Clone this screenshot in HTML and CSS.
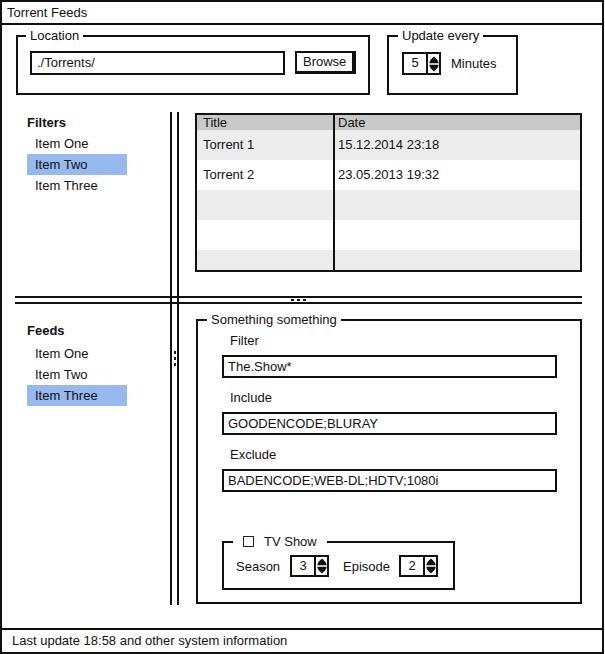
FILE: index.html
```html
<!DOCTYPE html>
<html>
<head>
<meta charset="utf-8">
<title>Torrent Feeds</title>
<link rel="stylesheet" href="styles.css">
</head>
<body>
<div class="window">
  <div class="titlebar">Torrent Feeds</div>
  <div class="content">
    <div class="toprow">
      <fieldset class="group loc">
        <legend>Location</legend>
        <div class="row">
          <div class="textbox loc-input">./Torrents/</div>
          <div class="button">Browse</div>
        </div>
      </fieldset>
      <fieldset class="group upd">
        <legend>Update every</legend>
        <div class="row">
          <div class="spin big">
            <div class="spin-val">5</div>
            <div class="spin-arr"><svg width="10" height="16" viewBox="0 0 10 16"><path d="M5 0.5C7 2.5 9.6 4.2 9.6 7.2H0.4C0.4 4.2 3 2.5 5 0.5Z M0.4 8.8H9.6C9.6 11.8 7 13.5 5 15.5C3 13.5 0.4 11.8 0.4 8.8Z" fill="#111"/></svg></div>
          </div>
          <span class="unit">Minutes</span>
        </div>
      </fieldset>
    </div>

    <div class="splitgrid">
      <div class="pane-list top">
        <div class="list-title">Filters</div>
        <div class="list-item">Item One</div>
        <div class="list-item selected">Item Two</div>
        <div class="list-item">Item Three</div>
      </div>

      <div class="pane-table">
        <div class="table">
          <div class="trow thead"><div class="cell c1">Title</div><div class="cell c2">Date</div></div>
          <div class="trow odd"><div class="cell c1">Torrent 1</div><div class="cell c2">15.12.2014 23:18</div></div>
          <div class="trow"><div class="cell c1">Torrent 2</div><div class="cell c2">23.05.2013 19:32</div></div>
          <div class="trow odd"><div class="cell c1"></div><div class="cell c2"></div></div>
          <div class="trow"><div class="cell c1"></div><div class="cell c2"></div></div>
          <div class="trow odd"><div class="cell c1"></div><div class="cell c2"></div></div>
        </div>
      </div>

      <div class="pane-list bottom">
        <div class="list-title">Feeds</div>
        <div class="list-item">Item One</div>
        <div class="list-item">Item Two</div>
        <div class="list-item selected">Item Three</div>
      </div>

      <div class="pane-form">
        <fieldset class="group form">
          <legend>Something something</legend>
          <div class="field">
            <div class="field-label">Filter</div>
            <div class="textbox field-input">The.Show*</div>
          </div>
          <div class="field">
            <div class="field-label">Include</div>
            <div class="textbox field-input">GOODENCODE;BLURAY</div>
          </div>
          <div class="field">
            <div class="field-label">Exclude</div>
            <div class="textbox field-input">BADENCODE;WEB-DL;HDTV;1080i</div>
          </div>
          <fieldset class="group tv">
            <legend><span class="checkbox"></span>TV Show</legend>
            <div class="tvrow">
              <span class="tv-label season">Season</span>
              <div class="spin small">
                <div class="spin-val">3</div>
                <div class="spin-arr"><svg width="10" height="16" viewBox="0 0 10 16"><path d="M5 0.5C7 2.5 9.6 4.2 9.6 7.2H0.4C0.4 4.2 3 2.5 5 0.5Z M0.4 8.8H9.6C9.6 11.8 7 13.5 5 15.5C3 13.5 0.4 11.8 0.4 8.8Z" fill="#111"/></svg></div>
              </div>
              <span class="tv-label episode">Episode</span>
              <div class="spin small">
                <div class="spin-val">2</div>
                <div class="spin-arr"><svg width="10" height="16" viewBox="0 0 10 16"><path d="M5 0.5C7 2.5 9.6 4.2 9.6 7.2H0.4C0.4 4.2 3 2.5 5 0.5Z M0.4 8.8H9.6C9.6 11.8 7 13.5 5 15.5C3 13.5 0.4 11.8 0.4 8.8Z" fill="#111"/></svg></div>
              </div>
            </div>
          </fieldset>
        </fieldset>
      </div>

      <div class="vsplit"><div class="dots-v"><span></span><span></span><span></span></div></div>
      <div class="hsplit"><div class="dots-h"><span></span><span></span><span></span></div></div>
    </div>
  </div>
  <div class="statusbar">Last update 18:58 and other system information</div>
</div>
</body>
</html>
```

FILE: styles.css
```css
html, body {
  margin: 0;
  padding: 0;
  background: #fff;
}
body {
  font-family: "Liberation Sans", Arial, sans-serif;
  font-size: 13px;
  color: #111;
}
.window {
  box-sizing: border-box;
  width: 604px;
  height: 654px;
  border: 2px solid #111;
  display: flex;
  flex-direction: column;
}
.titlebar {
  height: 21px;
  line-height: 21px;
  padding-left: 5px;
  border-bottom: 2px solid #111;
  flex: none;
}
.content {
  flex: 1;
  min-height: 0;
  display: flex;
  flex-direction: column;
  padding: 3px 20px 23px 13px;
}
.toprow {
  display: flex;
  align-items: flex-start;
  gap: 17px;
  margin-left: 1px;
}
.group {
  margin: 0;
  border: 2px solid #111;
  min-width: 0;
  box-sizing: border-box;
}
.group > legend {
  padding: 0 4px;
  margin-left: -4px;
  line-height: 16px;
}
.row {
  display: flex;
  align-items: flex-start;
}
.loc {
  width: 354px;
  padding: 7px 12px 18px 12px;
}
.textbox {
  box-sizing: border-box;
  border: 2px solid #111;
  background: #fff;
  white-space: nowrap;
}
.loc-input {
  width: 257px;
  height: 24px;
  line-height: 20px;
  padding-left: 5px;
}
.button {
  box-sizing: border-box;
  margin-left: 10px;
  width: 61px;
  height: 23px;
  border-style: solid;
  border-color: #111;
  border-width: 2px 4px 3px 2px;
  line-height: 18px;
  text-align: center;
}
.upd {
  width: 131px;
  padding: 8px 13px 18px 13px;
}
.upd .row {
  align-items: center;
}
.unit {
  margin-left: 10px;
}
.spin {
  box-sizing: border-box;
  display: flex;
  border: 2px solid #111;
  background: #fff;
}
.spin.big {
  width: 39px;
  height: 23px;
}
.spin.small {
  width: 39px;
  height: 22px;
}
.spin-val {
  box-sizing: border-box;
  width: 24px;
  border-right: 2px solid #111;
  text-align: center;
  line-height: 18px;
}
.spin-arr {
  flex: 1;
  display: flex;
  align-items: center;
  justify-content: center;
}
.spin-arr svg {
  display: block;
}

/* split layout */
.splitgrid {
  flex: 1;
  margin-top: 17px;
  display: grid;
  grid-template-columns: 155px 9px 1fr;
  grid-template-rows: 184px 8px 1fr;
  min-height: 0;
}
.vsplit {
  grid-column: 2;
  grid-row: 1 / 4;
  border-left: 2px solid #111;
  border-right: 2px solid #111;
  display: flex;
  align-items: center;
  justify-content: center;
}
.hsplit {
  grid-column: 1 / 4;
  grid-row: 2;
  border-top: 2px solid #111;
  border-bottom: 2px solid #111;
  display: flex;
  align-items: center;
  justify-content: center;
}
.dots-h {
  display: flex;
  gap: 3px;
}
.dots-h span {
  width: 3px;
  height: 2px;
  background: #111;
}
.dots-v {
  display: flex;
  flex-direction: column;
  gap: 3px;
}
.dots-v span {
  width: 2px;
  height: 3px;
  background: #111;
}

.pane-list {
  grid-column: 1;
  padding-left: 12px;
}
.pane-list.top {
  grid-row: 1;
}
.pane-list.bottom {
  grid-row: 3;
  padding-top: 16px;
}
.pane-list.bottom .list-title {
  margin-bottom: 2px;
}
.list-title {
  font-weight: bold;
  line-height: 21px;
}
.list-item {
  box-sizing: border-box;
  width: 100px;
  padding-left: 8px;
  line-height: 21px;
}
.list-item.selected {
  background: #96b9f0;
}

/* table */
.pane-table {
  grid-column: 3;
  grid-row: 1;
  padding: 1px 0 0 16px;
}
.table {
  box-sizing: border-box;
  height: 159px;
  border: 2px solid #111;
  overflow: hidden;
}
.trow {
  display: grid;
  grid-template-columns: 138px 1fr;
  height: 30px;
  line-height: 30px;
}
.trow.odd {
  background: #ececec;
}
.trow.thead {
  height: 15px;
  line-height: 15px;
  background: #c9c9c9;
}
.cell {
  box-sizing: border-box;
  white-space: nowrap;
}
.cell.c1 {
  border-right: 2px solid #111;
  padding-left: 6px;
}
.cell.c2 {
  padding-left: 3px;
}

/* form */
.pane-form {
  grid-column: 3;
  grid-row: 3;
  display: flex;
  flex-direction: column;
  padding: 8px 0 1px 17px;
}
.form {
  flex: 1;
  padding: 4px 0 0 24px;
}
.form > legend {
  margin-left: -15px;
}
.field + .field {
  margin-top: 11px;
}
.field-label {
  padding-left: 8px;
  line-height: 18px;
}
.field-input {
  margin-top: 5px;
  width: 335px;
  height: 23px;
  line-height: 19px;
  padding-left: 4px;
}
.tv {
  margin-top: 42px;
  width: 233px;
  padding: 5px 0 11px 12px;
}
.tv > legend {
  margin-left: -3px;
  padding: 0 10px;
}
.checkbox {
  display: inline-block;
  box-sizing: border-box;
  width: 11px;
  height: 11px;
  border: 1.5px solid #222;
  margin-right: 10px;
  vertical-align: -1px;
}
.tvrow {
  display: flex;
  align-items: center;
  height: 22px;
}
.tv-label.season {
  width: 54px;
}
.tv-label.episode {
  margin-left: 14px;
  width: 56px;
}

.statusbar {
  flex: none;
  height: 22px;
  line-height: 22px;
  padding-left: 10px;
  border-top: 2px solid #111;
}
```
